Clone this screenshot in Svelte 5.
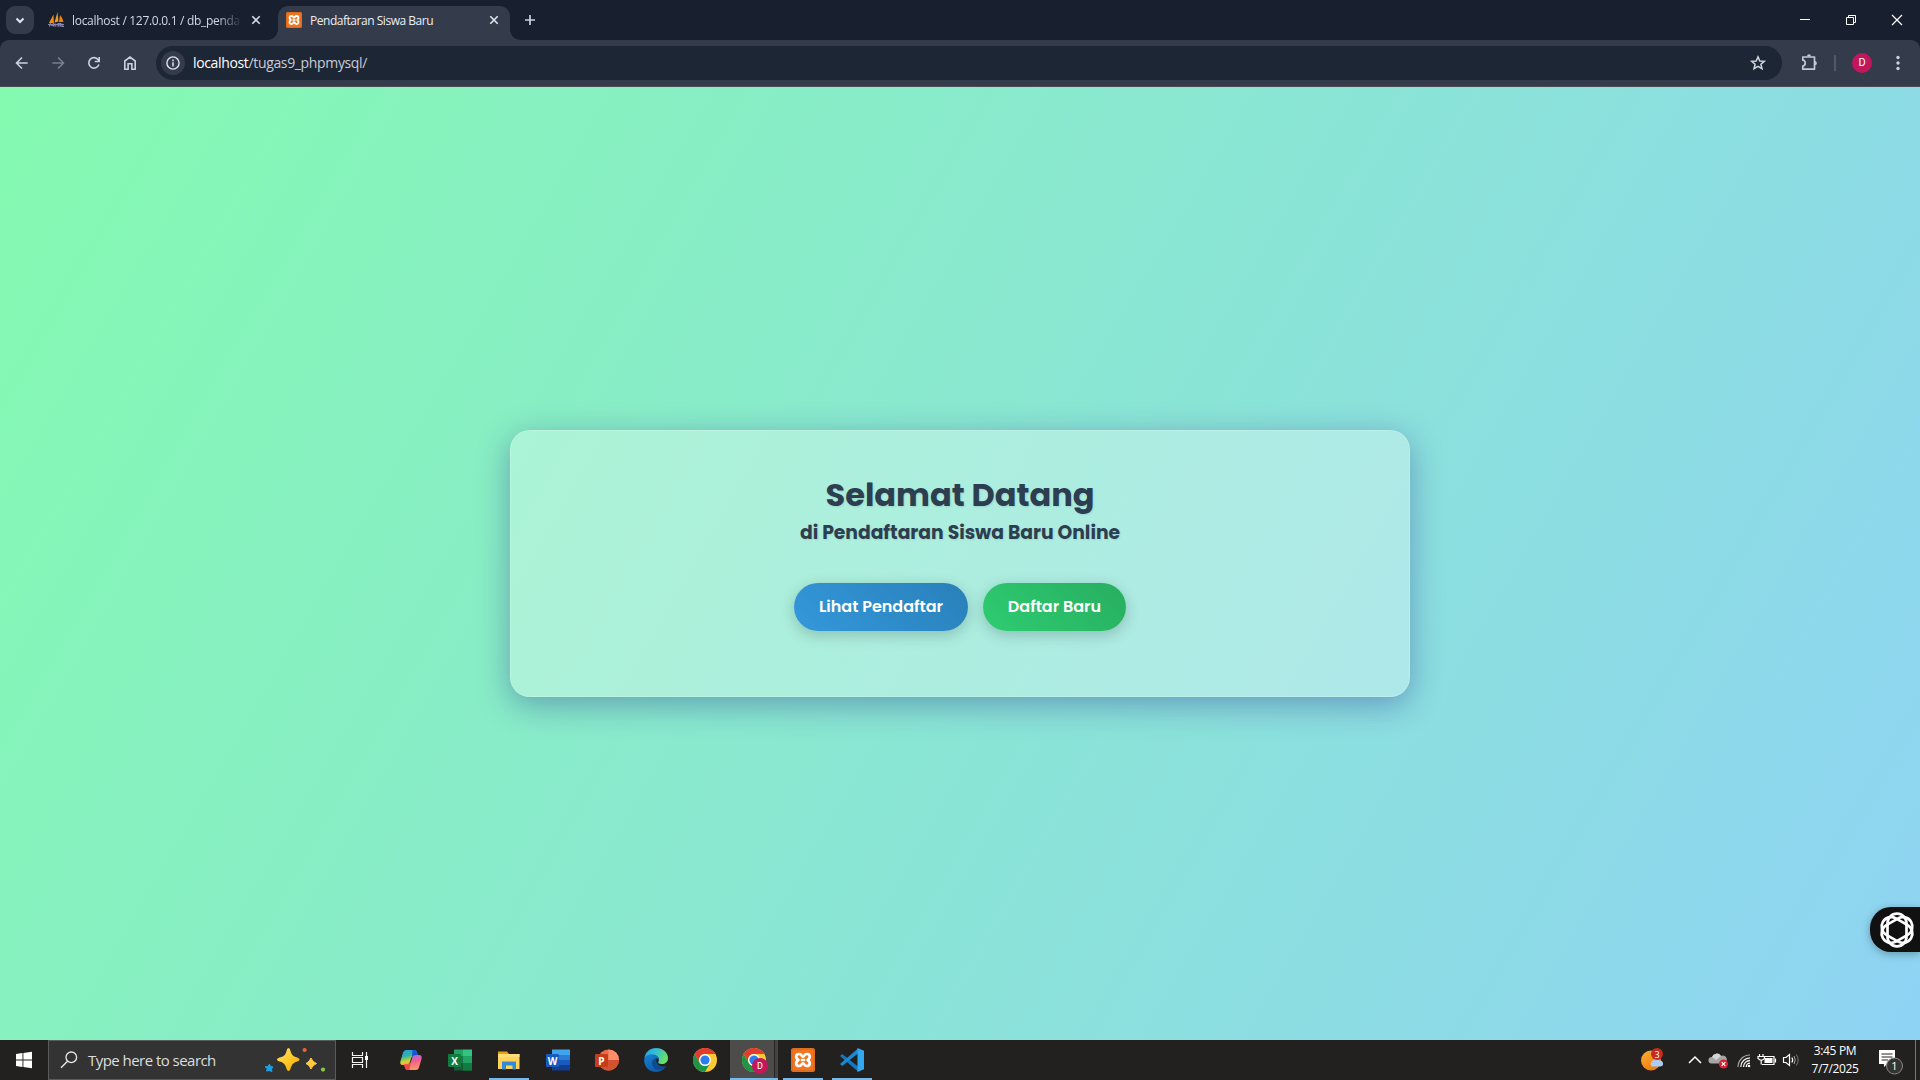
<script>
  const capsules = [0, 60, 120];
</script>

{#snippet chrome()}
  <circle cx="12" cy="12" r="12" fill="#fcc934" />
  <path d="M1.6 6A12 12 0 0 1 22.4 6H12A6 6 0 0 0 6.8 15Z" fill="#e33b2e" />
  <path d="M1.6 6A12 12 0 0 0 12 24L17.2 15A6 6 0 0 1 6.8 15Z" fill="#1e9447" />
  <circle cx="12" cy="12" r="5.9" fill="#fff" />
  <circle cx="12" cy="12" r="4.6" fill="#2b7cf0" />
{/snippet}

{#snippet xampp()}
  <rect width="24" height="24" rx="2.5" fill="#ee7623" />
  <rect x="1" y="1" width="22" height="22" rx="2" fill="none" stroke="#d5651a" />
  <path d="M8.2 6C4.600 6 4.200 10 7.400 12C4.200 14 4.600 18 8.2 18C11 18 10.4 15.4 12 15.4C13.6 15.4 13 18 15.8 18C19.400 18 19.800 14 16.600 12C19.800 10 19.400 6 15.8 6C13 6 13.6 8.6 12 8.6C10.4 8.6 11 6 8.2 6Z" fill="none" stroke="#fff" stroke-width="2.700" stroke-linejoin="round" />
  <path d="M9.800 12H14.200" stroke="#fff" stroke-width="2.400" />
{/snippet}

<div class="screen">
  <header class="tabs">
    <button class="tab-search" aria-label="Search tabs">
      <svg width="28" height="28" viewBox="0 0 28 28"><path d="M10.500 12.500L14 16L17.500 12.500" fill="none" stroke="#e3e6ee" stroke-width="2" /></svg>
    </button>
    <div class="tab idle">
      <svg width="16" height="16" viewBox="0 0 16 16">
        <path d="M1 11L5.500 2.500L5.800 11Z" fill="#f29111" />
        <path d="M6.500 10.500L9.500 0L10.500 9.500Z" fill="#f7971d" />
        <path d="M11 10L12 3Q15 6 15.500 10Z" fill="#e98413" />
        <path d="M1.500 14.500L2.300 11.500L4 13.500L5.500 11.500V14.500M7 11.500V14H8.500M10 11.500H12.500V14H10ZM14 11.500V14.300H16M0 12.500H16" fill="none" stroke="#8785ad" stroke-width="1.200" />
      </svg>
      <span class="tab-title faded">localhost / 127.0.0.1 / db_penda</span>
      <svg class="x" width="16" height="16" viewBox="0 0 16 16"><path d="M4.300 4.300L11.700 11.700M11.700 4.300L4.300 11.700" stroke="#d3d8e3" stroke-width="1.600" /></svg>
    </div>
    <div class="tab active">
      <svg width="16" height="16" viewBox="0 0 24 24">{@render xampp()}</svg>
      <span class="tab-title second">Pendaftaran Siswa Baru</span>
      <svg class="x" width="16" height="16" viewBox="0 0 16 16"><path d="M4.300 4.300L11.700 11.700M11.700 4.300L4.300 11.700" stroke="#e3e6ee" stroke-width="1.600" /></svg>
    </div>
    <svg class="plus" width="20" height="20" viewBox="0 0 20 20"><path d="M10 5V15M5 10H15" stroke="#ccd0de" stroke-width="1.700" /></svg>
    <div class="window-controls">
      <svg width="46" height="40" viewBox="0 0 46 40"><path d="M18 19.500H28" stroke="#fff" /></svg>
      <svg width="46" height="40" viewBox="0 0 46 40"><path d="M18.500 17.500H25.500V24.500H18.500ZM20.500 17V15.500H27.500V22.500H26" fill="none" stroke="#fff" /></svg>
      <svg width="46" height="40" viewBox="0 0 46 40"><path d="M18 15L28 25M28 15L18 25" stroke="#fff" stroke-width="1.200" /></svg>
    </div>
  </header>

  <nav class="toolbar">
    <div class="nav-icons">
      <svg width="36" height="46" viewBox="-18 -23 36 46"><path d="M5.700 0H-5M0 -5.500L-5.500 0L0 5.500" fill="none" stroke="#ccd0df" stroke-width="1.600" /></svg>
      <svg width="36" height="46" viewBox="-18 -23 36 46"><path d="M-5.700 0H5M0 -5.500L5.500 0L0 5.500" fill="none" stroke="#777e8d" stroke-width="1.600" /></svg>
      <svg width="36" height="46" viewBox="-18 -23 36 46"><path d="M4.900 1.600A5.200 5.200 0 1 1 4.200 -3.200L5 -1.900M5.200 -6V-1.500H.8" fill="none" stroke="#ccd0df" stroke-width="1.600" /></svg>
      <svg width="36" height="46" viewBox="-18 -23 36 46"><path d="M-5.200 6.200V-2L0 -6L5.200 -2V6.200H1.900V.8H-1.900V6.200Z" fill="none" stroke="#ccd0df" stroke-width="1.600" /></svg>
    </div>
    <div class="omnibox">
      <svg width="24" height="24" viewBox="-12 -12 24 24"><circle r="12" fill="#343b4b" /><circle r="6.100" fill="none" stroke="#e0e4ee" stroke-width="1.400" /><path d="M0 -3.400V-1.800M0 -.8V3.400" stroke="#e0e4ee" stroke-width="1.500" /></svg>
      <span class="url"><b>localhost</b>/tugas9_phpmysql/</span>
      <svg class="star" width="18" height="18" viewBox="-9 -9 18 18"><path d="M0 -6.200L1.800 -2L6.300 -1.700L2.900 1.300L4 5.700L0 3.300L-4 5.700L-2.900 1.300L-6.300 -1.700L-1.800 -2Z" fill="none" stroke="#d3d5dc" stroke-width="1.500" /></svg>
    </div>
    <svg class="puzzle" width="20" height="20" viewBox="-10 -10 20 20"><path d="M-6.200 -6H5.500V6.200H-6.200V3C-3 3 -3 -2.800 -6.200 -2.800Z" fill="none" stroke="#c3c9dc" stroke-width="1.700" stroke-linejoin="round" /><path d="M-2 -6.500A2 2.200 0 0 1 2 -6.500ZM6 -2A2.400 2.200 0 0 1 6 2.300Z" fill="#c3c9dc" /></svg>
    <i class="divider"></i>
    <span class="avatar">D</span>
    <svg class="dots" width="8" height="20" viewBox="-4 -10 8 20" fill="#ccd0df"><circle cy="-5.500" r="1.700" /><circle r="1.700" /><circle cy="5.500" r="1.700" /></svg>
  </nav>

  <main>
    <section class="card">
      <h1>Selamat Datang</h1>
      <h2>di Pendaftaran Siswa Baru Online</h2>
      <div class="actions">
        <button class="pill blue"><span>Lihat Pendaftar</span></button>
        <button class="pill green"><span>Daftar Baru</span></button>
      </div>
    </section>
    <div class="assistant">
      <svg width="38" height="38" viewBox="-19 -19 38 38">
        {#each capsules as angle}
          <rect x="-9.500" y="-16.300" width="19" height="32.600" rx="9.500" transform="rotate({angle})" fill="none" stroke="#fff" stroke-width="2.700" />
        {/each}
      </svg>
    </div>
  </main>

  <footer>
    <svg class="start" width="48" height="40" viewBox="0 0 48 40"><path d="M16 14L22.500 13.100V19.600H16ZM23.400 13L32 11.800V19.600H23.400ZM16 20.500H22.500V27L16 26.100ZM23.400 20.500H32V28.300L23.400 27.100Z" fill="#fff" /></svg>
    <div class="search">
      <svg width="18" height="18" viewBox="0 0 18 18"><circle cx="11.300" cy="6.300" r="5.300" fill="none" stroke="#e8e8e8" stroke-width="1.300" /><path d="M7.500 10.200L1 16.700" stroke="#e8e8e8" stroke-width="1.400" /></svg>
      <span>Type here to search</span>
      <svg class="sparkles" width="64" height="28" viewBox="0 0 64 28">
        <defs><linearGradient id="spark" x2="1" y2="1"><stop stop-color="#ffe178" /><stop offset=".5" stop-color="#ffca28" /><stop offset="1" stop-color="#f5a50a" /></linearGradient></defs>
        <path d="M24.500 2Q26 2 26.500 5Q27.800 10 31.500 11Q35.500 12 35.500 13.500Q35.500 15 31.500 16Q28 17.500 27 21Q26 25 24.500 25Q23 25 22 21Q21 17.500 17.500 16Q13 15 13 13.500Q13 12 17.500 11Q21.500 10 22.500 5Q23 2 24.500 2Z" fill="url(#spark)" />
        <path d="M47 12Q48.500 16 52.500 17.500Q48.500 19 47 23Q45.500 19 42 17.500Q45.500 16 47 12Z" fill="#ffc83d" stroke="#ffc83d" stroke-linejoin="round" />
        <path d="M5.500 18L6.500 20.500L9 21L7.500 23L8 25.500L5.200 24.500L2.500 25L3.300 22.500L1 20.800L4 20.500Z" fill="#17a3e8" stroke="#17a3e8" stroke-linejoin="round" />
        <circle cx="40.600" cy="4" r="2.100" fill="#f0642b" /><circle cx="59" cy="23.600" r="2.100" fill="#85c93e" />
      </svg>
    </div>
    <svg class="taskview" width="48" height="40" viewBox="0 0 48 40"><path d="M16.500 12V15.500H26.500V12M16.500 28V24.500H26.500V28M16.500 17.500H26.500V22.500H16.500ZM30.500 12V28" fill="none" stroke="#f2f2f2" stroke-width="1.200" /><rect x="29" y="16" width="3" height="4" fill="#fff" /></svg>

    <div class="apps">
      <div class="app"><svg width="24" height="24" viewBox="0 0 24 24">
        <defs><linearGradient id="cpa" x2=".3" y2="1"><stop stop-color="#1fa0f4" /><stop offset=".45" stop-color="#31b3a1" /><stop offset=".8" stop-color="#d8d22b" /><stop offset="1" stop-color="#f6a52a" /></linearGradient><linearGradient id="cpb" x2=".2" y2="1"><stop stop-color="#a466f1" /><stop offset=".5" stop-color="#ee5f91" /><stop offset="1" stop-color="#fb9464" /></linearGradient></defs>
        <path d="M7 2H15Q17.500 2 18.200 5L19 8H15Q13 8 12.200 10L10.500 15Q9.800 17 7 17H3.500Q.5 17 1.500 13L4 4.500Q5 2 7 2Z" fill="url(#cpa)" />
        <path d="M13.500 2H15.500Q17.500 2 18.200 5L19 8H15Q13.500 8 13 9Z" fill="#1953dd" />
        <path d="M17 22H9Q6.500 22 5.800 19L5 16H9Q11 16 11.800 14L13.500 9Q14.200 7 17 7H20Q23.500 7 22.500 11L20 19.500Q19 22 17 22Z" fill="url(#cpb)" />
        <path d="M10.500 22H8.500Q6.500 22 5.800 19L5 16.500H9Q10.500 16 11.500 15Z" fill="#ef4742" />
      </svg></div>
      <div class="app"><svg width="24" height="24" viewBox="0 0 24 24"><path d="M6 1.500H15V8H6Z" fill="#21a366" /><path d="M15 1.500H24V8H15Z" fill="#33c481" /><path d="M6 8H15V15H6Z" fill="#107c41" /><path d="M15 8H24V15H15Z" fill="#21a366" /><path d="M6 15H24V22.500H6Z" fill="#185c37" /><path d="M15 15H24V22.500H15Z" fill="#107c41" /><rect y="6" width="13" height="13" rx="1" fill="#107c41" /><text class="letter" x="6.500" y="16.500">X</text></svg></div>
      <div class="app open"><svg width="24" height="24" viewBox="0 0 24 24"><path d="M1 3.500H10L12 6H22V12H1Z" fill="#e8a30b" /><path d="M1 6H22.500V21H1Z" fill="#ffd35c" /><path d="M1 6H22.500V9H1Z" fill="#ffdd79" /><path d="M5 21.500V13.500H19V21.500H15.500V17.500H9V21.500Z" fill="#328bd3" /></svg></div>
      <div class="app"><svg width="24" height="24" viewBox="0 0 24 24"><path d="M6 1.500H24V7H6Z" fill="#41a5ee" /><path d="M6 7H24V12H6Z" fill="#2b7cd3" /><path d="M6 12H24V17H6Z" fill="#185abd" /><path d="M6 17H24V22.500H6Z" fill="#103f91" /><rect y="6" width="13" height="13" rx="1" fill="#185abd" /><text class="letter" x="6.500" y="16.500">W</text></svg></div>
      <div class="app"><svg width="24" height="24" viewBox="0 0 24 24"><circle cx="13.500" cy="12" r="10.500" fill="#ed6c47" /><path d="M13.500 1.500A10.500 10.500 0 0 1 24 12H13.500Z" fill="#ff8f6b" /><path d="M3 12H24A10.500 10.500 0 0 1 3 12Z" fill="#d35230" /><rect y="6" width="13" height="13" rx="1" fill="#c43e1c" /><text class="letter" x="6.500" y="16.500">P</text></svg></div>
      <div class="app"><svg width="24" height="24" viewBox="0 0 24 24">
        <defs><linearGradient id="edgeTop" x1="0" y1="0" x2="1" y2=".4"><stop stop-color="#229ee4" /><stop offset=".5" stop-color="#33bfd3" /><stop offset="1" stop-color="#69df65" /></linearGradient><linearGradient id="edgeLow" x2=".8" y2="1"><stop stop-color="#1684d7" /><stop offset="1" stop-color="#0b519f" /></linearGradient></defs>
        <path d="M.3 10.500C1.300 4 6 0 12 0C19 0 24 4.800 24 10C24 14 21 16 18 16C15 16 13.500 14.800 14.500 13.500C16.500 10 13 7 8.500 7C4 7 1 9 .3 10.500Z" fill="url(#edgeTop)" />
        <path d="M.2 12C.4 8.500 4 6.300 8 6.300C12.500 6.300 15.500 9.300 15 12.500C14 9 8.500 10.500 8.500 15C8.500 21 15 24 22.500 18C20 22 16 24 12 24C5 24 0 18.500 .2 12Z" fill="url(#edgeLow)" />
        <path d="M8.500 15C8.500 11.500 11 10 12.500 10.500C11.500 14 14 18.500 20 18.500L22.500 18C17 24 8.500 21.500 8.500 15Z" fill="#104b91" />
      </svg></div>
      <div class="app"><svg width="24" height="24" viewBox="0 0 24 24">{@render chrome()}</svg></div>
      <div class="app current"><svg width="27" height="26" viewBox="0 0 27 26">{@render chrome()}<circle cx="18" cy="18" r="8" fill="#c2185b" /><text class="letter badge-letter" x="18" y="21.300">D</text></svg></div>
      <div class="app open"><svg width="24" height="24" viewBox="0 0 24 24">{@render xampp()}</svg></div>
      <div class="app open"><svg width="24" height="24" viewBox="0 0 24 24"><path d="M0 8L2.200 6L18 18.500V23.500Z" fill="#1778bd" /><path d="M0 16L2.200 18L18 5.500V.5Z" fill="#198bd4" /><path d="M17.500 0L24 2.700V21.300L17.500 24Z" fill="#32a8f0" /></svg></div>
    </div>

    <div class="tray">
      <svg class="weather" width="24" height="24" viewBox="0 0 24 24"><defs><linearGradient id="sun" x2=".6" y2="1"><stop stop-color="#fbb034" /><stop offset="1" stop-color="#ee7a12" /></linearGradient></defs><circle cx="11" cy="12.500" r="10" fill="url(#sun)" /><path d="M12 18.500A3.200 3.200 0 0 1 12.500 13A4 4 0 0 1 19.500 12.500A3 3 0 0 1 20.500 18.500Z" fill="#a9cdf8" /><circle cx="17" cy="6" r="6" fill="#c42b1c" /><text class="count" x="17" y="9.500">3</text></svg>
      <svg class="caret" width="24" height="24" viewBox="0 0 24 24"><path d="M6 15L12 9L18 15" fill="none" stroke="#fff" stroke-width="1.500" /></svg>
      <svg width="24" height="24" viewBox="0 0 24 24"><path d="M4 15.500A3.300 3.300 0 0 1 5 9A5 5 0 0 1 14 8A4 4 0 0 1 17.500 15.500Z" fill="#a6a6a6" /><path d="M5 9A5 5 0 0 1 14 8L9 12Z" fill="#d5d5d5" /><circle cx="16.500" cy="16" r="4.600" fill="#d92332" /><path d="M14.700 14.200L18.300 17.800M18.300 14.200L14.700 17.800" stroke="#fff" stroke-width="1.200" /></svg>
      <svg width="24" height="24" viewBox="0 0 24 24"><g fill="none"><path d="M7 19A12 12 0 0 1 19 7" stroke="#a8a8a8" stroke-width="1.200" /><path d="M9.800 19A9.200 9.200 0 0 1 19 9.800M12.500 19A6.500 6.500 0 0 1 19 12.500" stroke="#eee" stroke-width="1.300" /><path d="M15.200 19A3.800 3.800 0 0 1 19 15.200" stroke="#fff" stroke-width="1.300" /></g><circle cx="18" cy="18" r="1.300" fill="#fff" /></svg>
      <svg width="24" height="24" viewBox="0 0 24 24"><path d="M8 8.500H19V16.500H7M20.500 10.500V14.500" fill="none" stroke="#fff" stroke-width="1.200" /><rect x="9.500" y="10" width="8" height="5" fill="#fff" /><path d="M4.500 6V8.500M8 6V8.500M3 8.500H9.500V10.500L7.500 12H5L3 10.500ZM6.200 12V16.500" fill="none" stroke="#fff" stroke-width="1.200" /></svg>
      <svg class="volume" width="24" height="24" viewBox="0 0 24 24"><g fill="none"><path d="M3.500 9.500H6L9.500 6.500V17.500L6 14.500H3.500Z" stroke="#fff" stroke-width="1.200" /><path d="M11.800 9.500Q13.500 12 11.800 14.500" stroke="#fff" stroke-width="1.200" /><path d="M14 8Q16.500 12 14 16" stroke="#aaa" /><path d="M16.300 6.500Q20 12 16.300 17.500" stroke="#777" /></g></svg>
      <div class="clock"><span>3:45 PM</span><span class="date">7/7/2025</span></div>
      <svg class="notice" width="28" height="28" viewBox="0 0 28 28"><path d="M1 1H17V15H9L6 18V15H1Z" fill="#fff" /><path d="M3.500 5H14.500M3.500 8H14.500M3.500 11H10" stroke="#252423" stroke-width="1.200" /><circle cx="16.500" cy="17" r="8" fill="#353432" stroke="#898989" /><text class="count one" x="16.500" y="21">1</text></svg>
      <i class="desktop"></i>
    </div>
  </footer>
</div>

<style>
  :global(body) { margin: 0; overflow: hidden; }
  * { box-sizing: border-box; }
  svg { display: block; flex: none; }
  button { border: 0; padding: 0; margin: 0; font: inherit; }
  .screen { width: 1920px; height: 1080px; display: flex; flex-direction: column; font-family: "Open Sans", "Noto Sans", sans-serif; background: #182030; }

  .tabs { height: 40px; flex: none; display: flex; background: #182030; padding-left: 6px; }
  .tab-search { width: 28px; height: 28px; margin-top: 6px; border-radius: 9px; background: #343b4b; }
  .tab { display: flex; align-items: center; height: 28px; margin-top: 6px; color: #d3d8e3; }
  .idle { width: 244px; padding: 0 14px; }
  .tab-title { width: 168px; margin-left: 8px; padding-top: 1px; font-size: 12px; line-height: 18px; white-space: nowrap; letter-spacing: -0.3px; }
  .second { letter-spacing: -0.47px; }
  .faded { mask-image: linear-gradient(90deg, #000 145px, transparent 170px); }
  .x { margin-left: 8px; }
  .active { width: 232px; height: 34px; padding: 0 8px 6px; border-radius: 10px 10px 0 0; background: #343b4b; color: #eceef4; position: relative; }
  .active::before, .active::after { content: ""; position: absolute; bottom: 0; width: 10px; height: 10px; }
  .active::before { left: -10px; background: radial-gradient(circle at 0 0, transparent 9.5px, #343b4b 10px); }
  .active::after { right: -10px; background: radial-gradient(circle at 100% 0, transparent 9.5px, #343b4b 10px); }
  .plus { margin: 10px 0 0 10px; }
  .window-controls { display: flex; margin-left: auto; }

  .toolbar { height: 47px; flex: none; display: flex; align-items: center; background: #343b4b; border-radius: 9px 9px 0 0; border-bottom: 1px solid #4a4b55; padding-left: 4px; }
  .nav-icons { display: flex; width: 152px; }
  .omnibox { width: 1626px; height: 34px; border-radius: 17px; background: #1d2635; display: flex; align-items: center; padding: 0 15px 0 5px; }
  .url { margin-left: 8px; font-size: 14px; line-height: 20px; color: #c7ccd8; letter-spacing: -0.35px; }
  .url b { font-weight: 400; color: #fff; }
  .star { margin-left: auto; }
  .puzzle { margin-left: 17px; }
  .divider { width: 2px; height: 16px; margin-left: 15px; background: #505869; }
  .avatar { width: 20px; height: 20px; margin-left: 16px; border-radius: 50%; background: #c2185b; color: #fff; font: 11px/20px Roboto, sans-serif; text-align: center; }
  .dots { margin-left: 22px; }

  main { height: 953px; flex: none; position: relative; display: flex; justify-content: center; align-items: flex-start; padding-top: 343px; overflow: hidden; background: linear-gradient(120deg, #84fab0, #8fd3f4); }
  .card { width: 900px; height: 267px; padding: 40px 40px 0; border: 1px solid rgba(255, 255, 255, .18); border-radius: 20px; background: rgba(255, 255, 255, .3); box-shadow: 0 8px 32px rgba(31, 38, 135, .37); text-align: center; font-family: Poppins, Inter, sans-serif; color: #2c3e50; }
  h1, h2 { margin: 0; font-weight: 700; white-space: nowrap; text-shadow: 1px 1px 2px rgba(0, 0, 0, .1); }
  h1 { font-size: 32px; line-height: 48px; }
  h2 { font-size: 18.72px; line-height: 28px; }
  .actions { display: flex; justify-content: center; gap: 15px; margin-top: 36px; }
  .pill { height: 48px; border-radius: 24px; color: #fff; font-size: 16px; line-height: 48px; font-weight: 600; white-space: nowrap; box-shadow: 0 4px 15px rgba(0, 0, 0, .2); }
  .blue { width: 174px; background: linear-gradient(45deg, #3498db, #2980b9); }
  .green { width: 143px; background: linear-gradient(45deg, #2ecc71, #27ae60); }
  .assistant { position: absolute; right: 0; top: 820px; width: 50px; height: 45px; padding: 4px 0 0 8px; border-radius: 21px 0 0 21px; background: #111; box-shadow: 0 2px 8px rgba(0, 0, 0, .3); }

  footer { height: 40px; flex: none; display: flex; background: #22211f; color: #fff; }
  .search { width: 288px; height: 40px; display: flex; align-items: center; border: 1px solid #5b5b5b; background: #333; padding: 0 7px 0 11px; }
  .search span { margin-left: 10px; font-size: 15px; color: #dedede; letter-spacing: -.54px; white-space: nowrap; }
  .sparkles { margin-left: auto; }
  .apps { display: flex; }
  .taskview { margin-right: 7px; }
  .app { width: 40px; height: 40px; margin-right: 9px; display: flex; align-items: center; justify-content: center; }
  .open { box-shadow: inset 0 -2px #76b9ed; }
  .current { width: 48px; margin: 0 5px 0 -4px; padding: 2px 4px 0 12px; justify-content: flex-start; background: linear-gradient(90deg, #4d4c4b 44px, #252525 44px, #252525 45px, #444342 45px); box-shadow: inset 0 -2px #76b9ed; }
  .letter { fill: #fff; font: 700 10px "Open Sans", sans-serif; text-anchor: middle; }
  .badge-letter { font: 9px Roboto, sans-serif; }
  .tray { display: flex; align-items: center; margin-left: auto; }
  .caret { margin-left: 18px; }
  .weather { margin-right: 1px; }
  .volume { transform: translateX(1px); }
  .clock { width: 64px; display: flex; flex-direction: column; align-items: center; font-size: 12px; line-height: 18px; letter-spacing: -.35px; }
  .count { fill: #fff; font: 9px "Open Sans", sans-serif; text-anchor: middle; }
  .one { font-size: 11px; }
  .notice { margin-left: 11px; margin-top: 6px; }
  .desktop { width: 5px; height: 40px; margin-left: 9px; border-left: 1px solid #777; }
</style>
